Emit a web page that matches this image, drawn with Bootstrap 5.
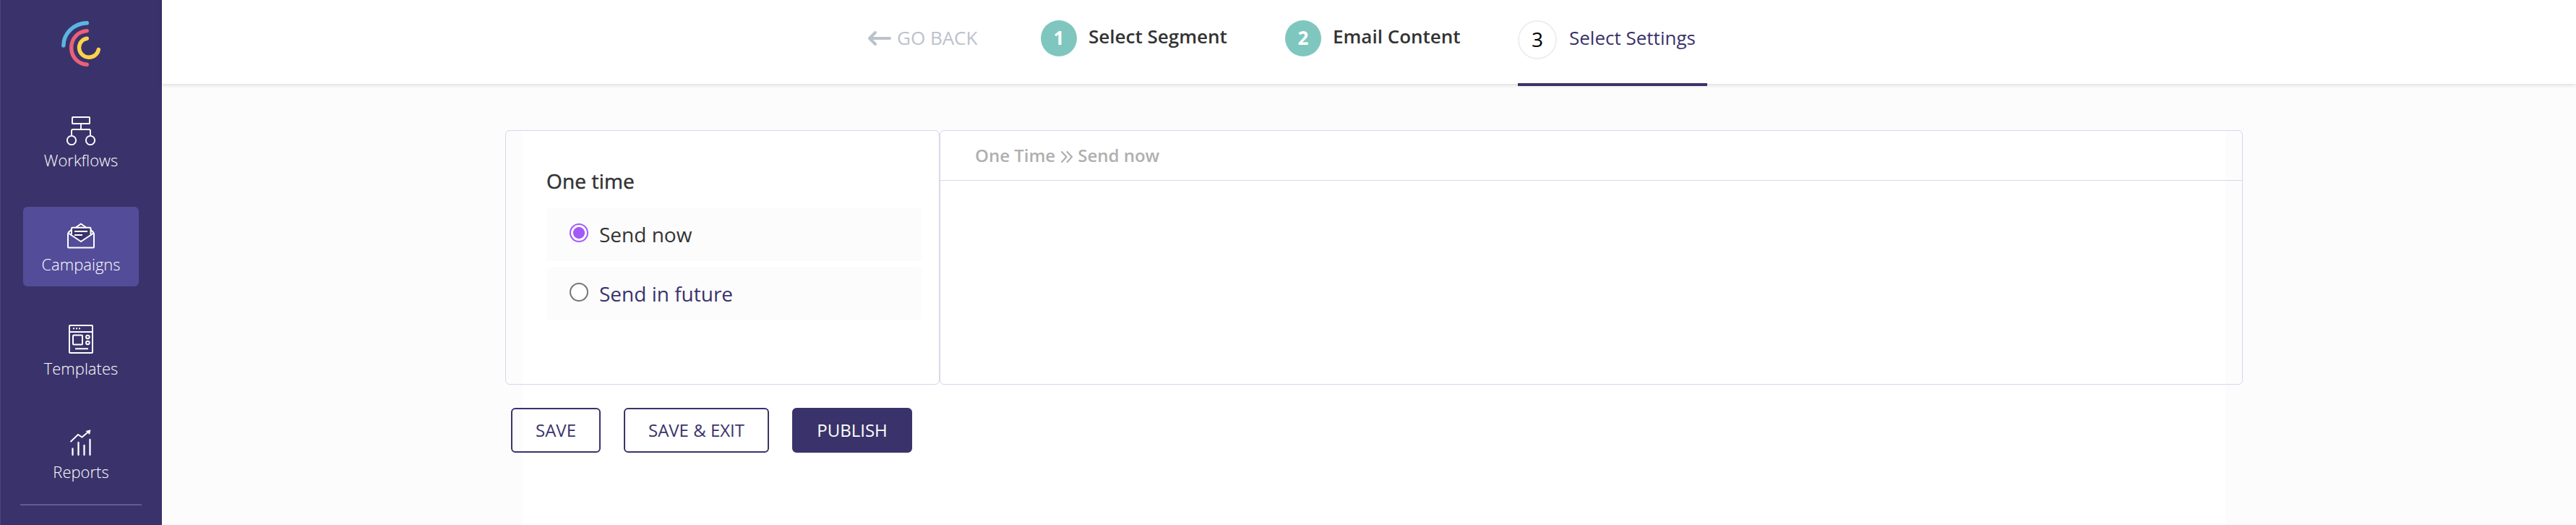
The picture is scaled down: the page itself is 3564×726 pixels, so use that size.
<!DOCTYPE html>
<html lang="en">
<head>
<meta charset="utf-8">
<meta name="viewport" content="width=device-width, initial-scale=1">
<title>Campaign settings</title>
<link href="https://cdn.jsdelivr.net/npm/bootstrap@5.3.0/dist/css/bootstrap.min.css" rel="stylesheet">
<style>
:root{--ink:#3a336b;--line:#d8d6ec}
body{font-family:"Open Sans","Noto Sans",sans-serif;background:#fcfcfc;color:#333;height:726px;overflow:hidden}
.side{width:224px;background:var(--ink);border-left:1px solid #4c457b;padding-right:1px}
.brand{height:142px;padding-top:29px}
.side-item{width:160px;height:110px;margin-bottom:33.75px;border-radius:6px;color:#fff;font-size:22px;font-weight:300;line-height:30px;padding-top:19px;text-decoration:none}
.side-item svg{width:40px;height:40px;margin-bottom:5px;flex:none}
.side-item.active{background:#534c99}
.side-rule{width:168px;height:2px;background:#625c91;margin-top:-20px}
.topbar{height:116px;background:#fff;box-shadow:0 1px 6px rgba(0,0,0,.16);padding-left:976px;font-size:26px;line-height:36px}
.go-back{color:#bcc2cc;width:240px;padding-top:34px}
.go-back svg{margin:1px 7px 0 0}
.step{padding-top:28px}
.step-1{width:338px}
.step-2{width:322px}
.step-dot{width:50px;height:50px;background:#7fc7be;color:#fff;font-weight:700;border-radius:50%;line-height:48px;text-align:center}
.step-name{font-weight:600;padding-top:4px;margin-left:16px}
.step.current{width:262px;height:119px;border-bottom:4px solid var(--ink);color:var(--ink)}
.current .step-dot{width:54px;height:54px;background:#fff;border:2px solid #eee;color:#000;font-weight:400;font-size:28px;line-height:48px}
.current .step-name{font-weight:400;padding-top:6px;margin-left:17px}
.sheet{background:#fff;width:2356px;height:546px;margin:64px 0 0 499px}
.panes{margin:0 -24px;height:352px}
.pane{border:1px solid var(--line);border-radius:6px}
.pane-l{width:601px;padding:50px 24px 0 56px;font-size:28px;line-height:38px}
.pane-l h2{font-size:28px;line-height:38px;height:56px;margin:0;font-weight:500;-webkit-text-stroke:.5px #333;letter-spacing:.15px;color:#333}
.pane-r{width:1803px}
.crumbs{height:69px;border-bottom:1px solid var(--line);padding:17px 0 0 48px;font-size:24px;line-height:33px;font-weight:600;color:#afafaf}
.crumbs svg{margin:5px 6px 0 7px}
.opt{height:74px;background:#fcfcfc;margin-bottom:8px;padding-left:32px}
.opt.later{border-radius:6px;color:var(--ink)}
.opt input{appearance:none;width:26px;height:26px;border:2px solid #767676;border-radius:50%;background:#fff;margin:0 15px 4px 0;flex:none}
.opt input:checked{border-color:#a259f7;background:radial-gradient(circle,#a259f7 7.6px,#fff 8.4px)}
.acts{margin:32px 0 0 -16px;gap:32px}
.act{height:62px;border:2px solid var(--ink);border-radius:6px;color:var(--ink);font-size:24px;line-height:34px;padding:12px 0;background:transparent}
.act-s{width:124px}
.act-m{width:201px}
.act-p{width:166px;background:var(--ink);color:#fff}
</style>
</head>
<body class="d-flex">
<aside class="side d-flex flex-column align-items-center flex-shrink-0">
  <div class="brand">
    <svg width="54" height="63" viewBox="0 0 54 63" fill="none" stroke-width="5.4" stroke-linecap="round"><path stroke="#5bb5e0" d="M35.3 2.8C17 3.5 3 17 2.8 34"/><path stroke="#ec6079" d="M35.3 13.6C22.5 14.5 13.7 24.5 13.7 37C13.7 49.500 22.5 59.4 35.3 60.3"/><path stroke="#fcd34a" d="M35.3 24.2C28.8 25 24.5 30.5 24.5 37A13.4 13.4 0 0 0 37.9 50.2C45 50.2 50.3 45.500 51.3 39.5"/></svg>
  </div>
  <a class="side-item d-flex flex-column align-items-center" href="#">
    <svg viewBox="0 0 40 40" fill="none" stroke="#fff" stroke-width="1.9"><rect x="8" y="1" width="24" height="9" rx=".6"/><path d="M20 10v8M7 27v-7q0-2 2-2h22q2 0 2 2v7"/><circle cx="7" cy="33" r="6.1"/><circle cx="33" cy="33" r="6.1"/></svg>
    <span>Workflows</span></a>
  <a class="side-item active d-flex flex-column align-items-center" href="#">
    <svg viewBox="0 0 40 40" fill="none" stroke="#fff" stroke-width="2" stroke-linejoin="round"><path d="M2 17.500v19q0 1 1 1h34q1 0 1-1v-19"/><path d="M13 9.500l7-5 7 5M7 12.500L2 17M33 12.500l5 4.500"/><path fill="#3a336b" d="M7 20.500V10.800q0-1 1-1h24.500q1 0 1 1v9.700"/><path fill="#3a336b" stroke="none" d="M7 19h26.500v1.500L20 29 7 20.500z"/><path d="M2 17l18 12 18-12M11 15h18M11 20h11"/></svg>
    <span>Campaigns</span></a>
  <a class="side-item d-flex flex-column align-items-center" href="#">
    <svg viewBox="0 0 40 40" fill="none" stroke="#fff" stroke-width="2"><rect x="4" y="1" width="32" height="38" rx="1"/><path d="M4 10h32M12 33.200h18M9 5.200h2m2 0h2m2 0h2"/><rect x="9" y="14.500" width="13" height="13" rx="1"/><circle cx="29.400" cy="17" r="2.300"/><circle cx="29.400" cy="25" r="2.300"/></svg>
    <span>Templates</span></a>
  <a class="side-item d-flex flex-column align-items-center" href="#">
    <svg viewBox="0 0 40 40" fill="none" stroke="#fff" stroke-width="2.300"><path stroke-width="1.900" d="M5.500 19L16 9l5.500 3.500L31 4.500"/><path fill="#fff" stroke="none" d="M26.500 4L33.500 2.200 32 9z"/><path stroke-linecap="round" d="M8.500 28.500v8.500M16.500 20v17M24.500 24v13M32.500 16v21"/></svg>
    <span>Reports</span></a>
  <div class="side-rule"></div>
</aside>
<main class="flex-grow-1">
  <header class="topbar d-flex align-items-start">
    <div class="go-back d-flex"><svg width="34" height="34" viewBox="0 0 34 34" fill="none" stroke="#bcc2cc" stroke-width="4" stroke-linecap="round" stroke-linejoin="round"><path d="M31 18H3M11 10L3 18l8 8"/></svg><span>GO BACK</span></div>
    <div class="step step-1 d-flex"><div class="step-dot">1</div><div class="step-name">Select Segment</div></div>
    <div class="step step-2 d-flex"><div class="step-dot">2</div><div class="step-name">Email Content</div></div>
    <div class="step current d-flex"><div class="step-dot">3</div><div class="step-name">Select Settings</div></div>
  </header>
  <div class="sheet">
    <div class="panes d-flex">
      <section class="pane pane-l">
        <h2>One time</h2>
        <label class="opt d-flex align-items-center"><input type="radio" name="when" checked><span>Send now</span></label>
        <label class="opt later d-flex align-items-center"><input type="radio" name="when"><span>Send in future</span></label>
      </section>
      <section class="pane pane-r">
        <div class="crumbs d-flex align-items-start"><span>One Time</span><svg width="18" height="18" viewBox="0 0 18 18" fill="none" stroke="#afafaf" stroke-width="2.200" stroke-linecap="round" stroke-linejoin="round" style="margin-top:10px"><path d="M2 2l6.500 7L2 16M9.500 2l6.500 7-6.500 7"/></svg><span>Send now</span></div>
      </section>
    </div>
    <div class="acts d-flex">
      <button class="act act-s" type="button">SAVE</button>
      <button class="act act-m" type="button">SAVE &amp; EXIT</button>
      <button class="act act-p" type="button">PUBLISH</button>
    </div>
  </div>
</main>
<script src="https://cdn.jsdelivr.net/npm/bootstrap@5.3.0/dist/js/bootstrap.bundle.min.js"></script>
</body>
</html>
